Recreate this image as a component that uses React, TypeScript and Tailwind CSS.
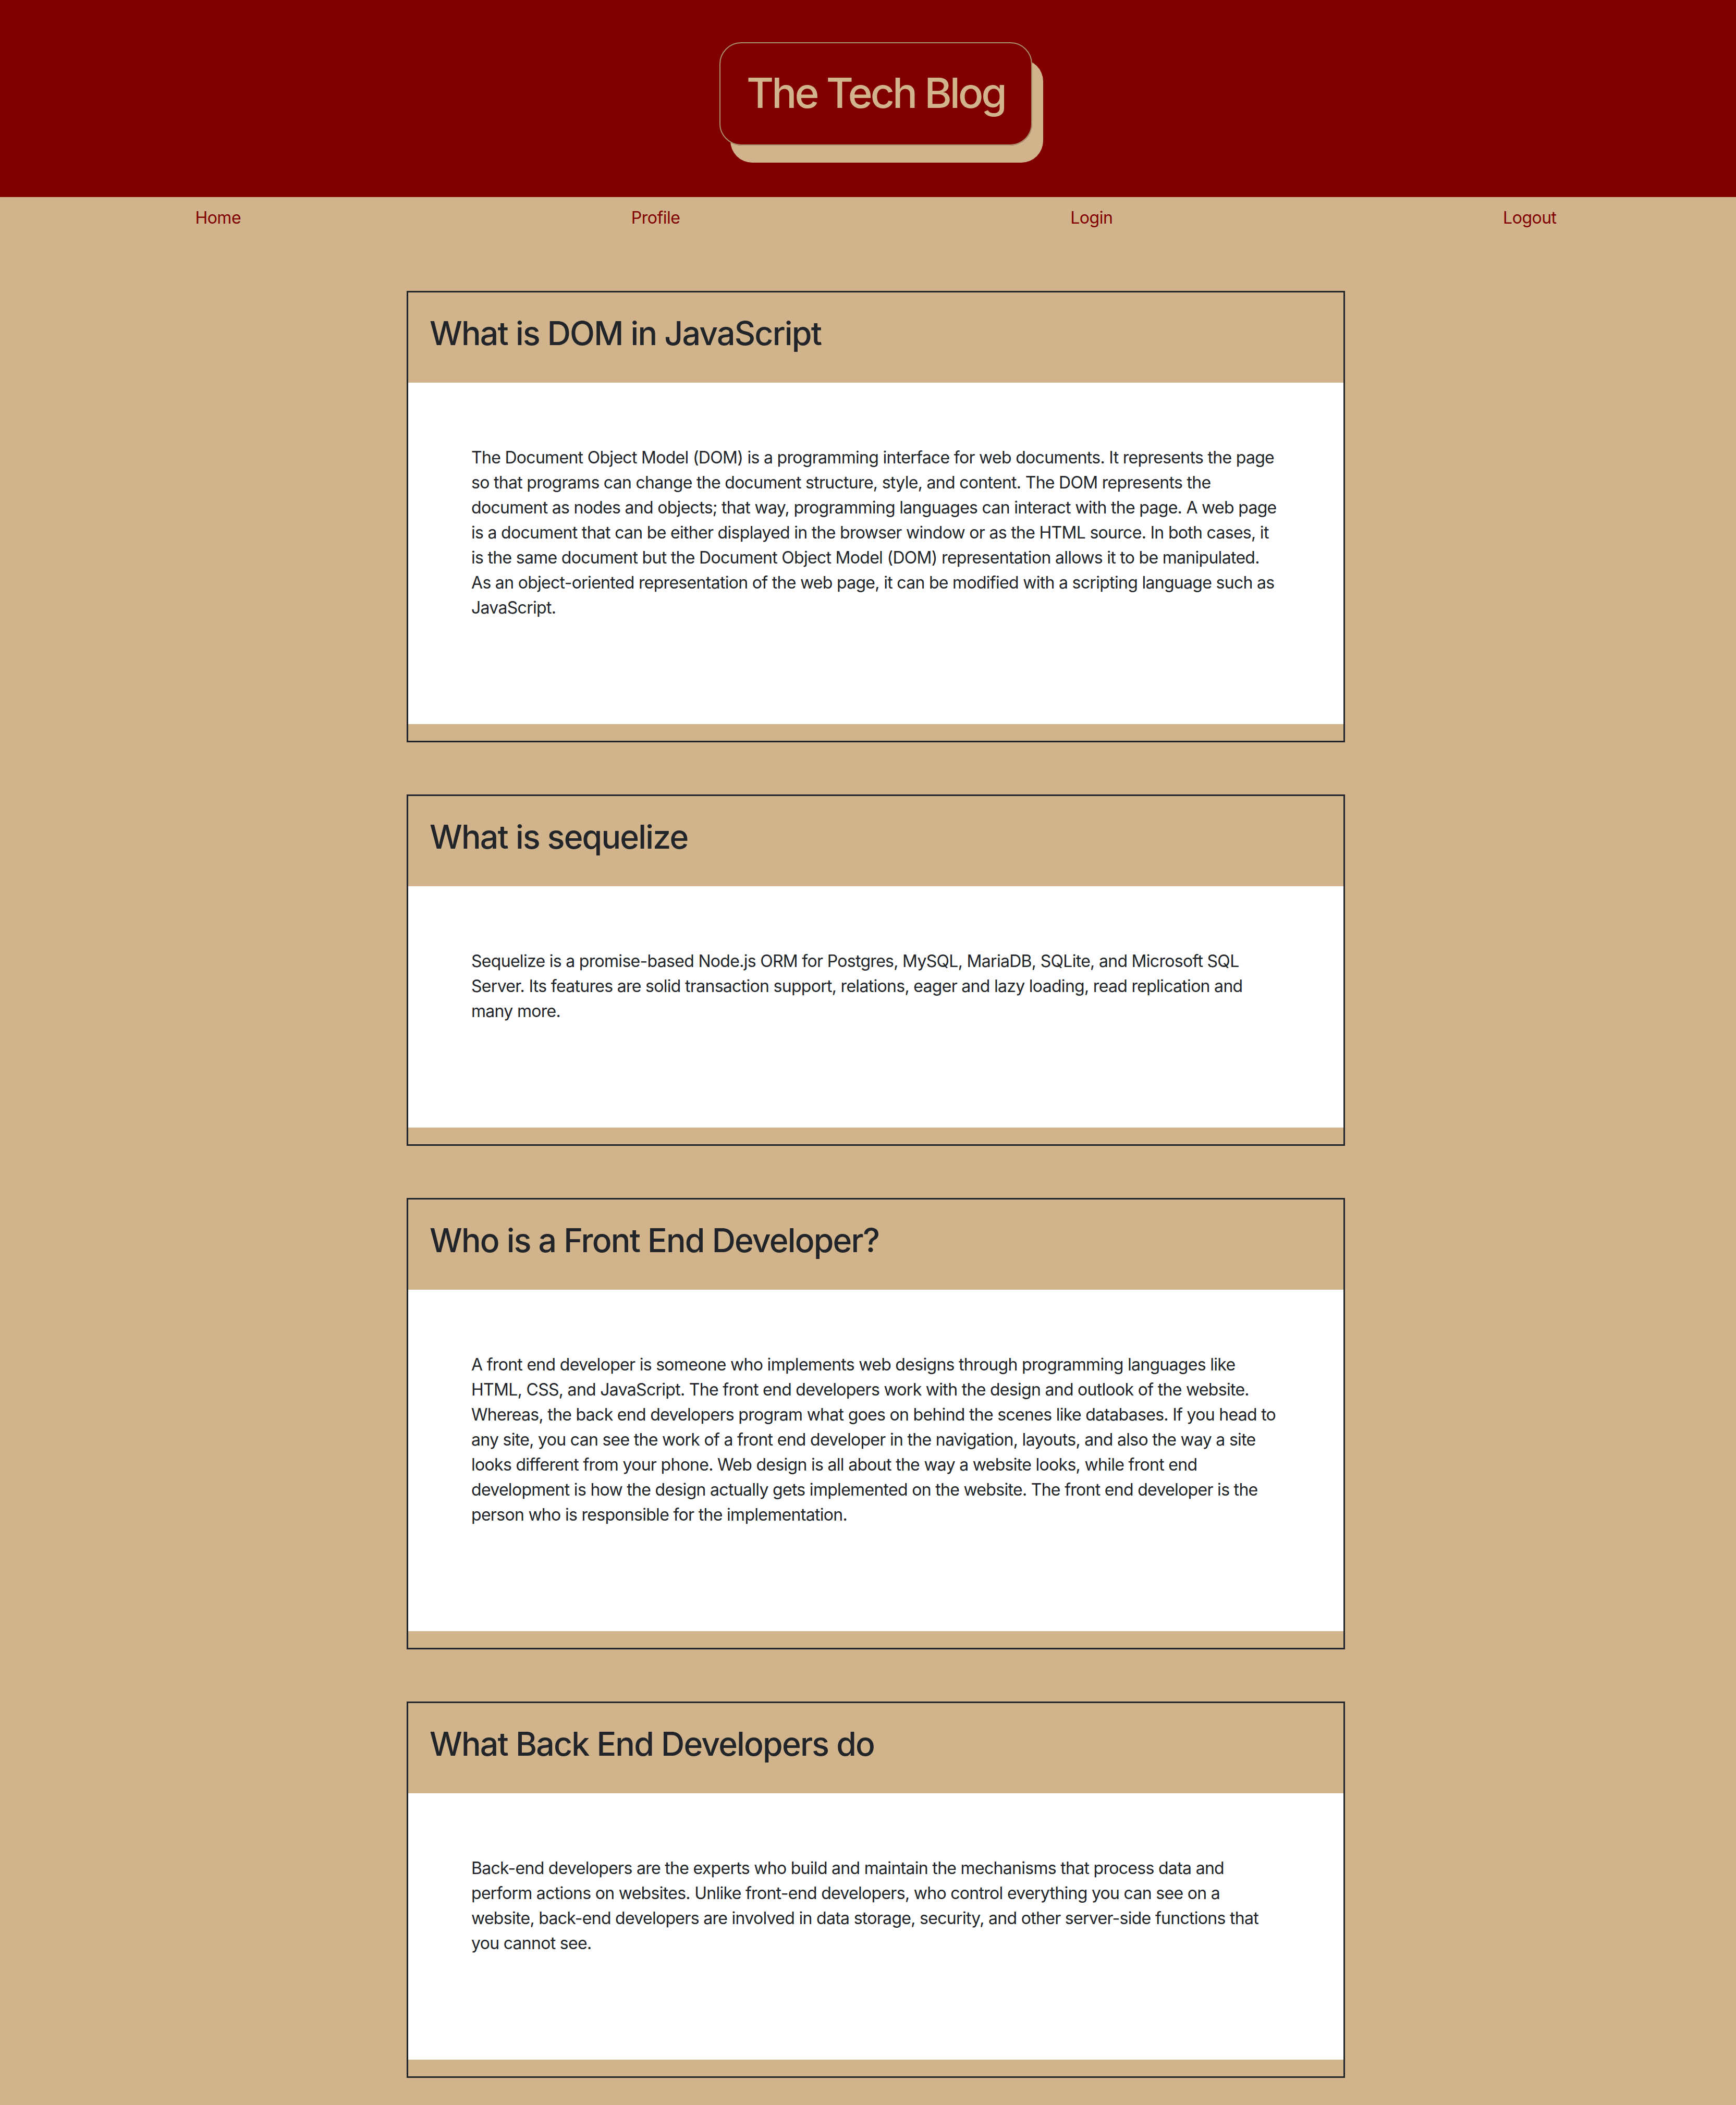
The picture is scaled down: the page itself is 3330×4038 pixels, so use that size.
const posts = [
  {
    title: "What is DOM in JavaScript",
    body: "The Document Object Model (DOM) is a programming interface for web documents. It represents the page so that programs can change the document structure, style, and content. The DOM represents the document as nodes and objects; that way, programming languages can interact with the page. A web page is a document that can be either displayed in the browser window or as the HTML source. In both cases, it is the same document but the Document Object Model (DOM) representation allows it to be manipulated. As an object-oriented representation of the web page, it can be modified with a scripting language such as JavaScript.",
  },
  {
    title: "What is sequelize",
    body: "Sequelize is a promise-based Node.js ORM for Postgres, MySQL, MariaDB, SQLite, and Microsoft SQL Server. Its features are solid transaction support, relations, eager and lazy loading, read replication and many more.",
  },
  {
    title: "Who is a Front End Developer?",
    body: "A front end developer is someone who implements web designs through programming languages like HTML, CSS, and JavaScript. The front end developers work with the design and outlook of the website. Whereas, the back end developers program what goes on behind the scenes like databases. If you head to any site, you can see the work of a front end developer in the navigation, layouts, and also the way a site looks different from your phone. Web design is all about the way a website looks, while front end development is how the design actually gets implemented on the website. The front end developer is the person who is responsible for the implementation.",
  },
  {
    title: "What Back End Developers do",
    body: "Back-end developers are the experts who build and maintain the mechanisms that process data and perform actions on websites. Unlike front-end developers, who control everything you can see on a website, back-end developers are involved in data storage, security, and other server-side functions that you cannot see.",
  },
];

const links = ["Home", "Profile", "Login", "Logout"];

function PostCard({ title, body }: { title: string; body: string }) {
  return (
    <article className="w-[1800px] mt-[100px] border-[3px] border-[#212529] bg-[#d2b48c]">
      <header className="px-[41px] pt-[41px] pb-[57px]">
        <h2 className="text-[62.6px] leading-[75px] font-medium tracking-[-1.8px] text-[#212529]">
          {title}
        </h2>
      </header>
      <div className="bg-white px-[121px] pt-[120px] pb-[199px]">
        <p className="text-[32px] leading-[48px] tracking-[-0.7px] text-[#212529]">{body}</p>
      </div>
      <div className="h-[32px]" />
    </article>
  );
}

export default function App() {
  return (
    <div className="min-h-screen overflow-hidden bg-[#d2b48c] pb-[52px] font-['Inter',sans-serif]">
      <header className="h-[378px] bg-[#800000] flex justify-center pt-[81px]">
        <div className="ml-[30px] w-[600px] h-[198px] rounded-[42px] border-2 border-[#a8906c] shadow-[21px_33px_0_#d2b48c] flex items-center justify-center">
          <h1 className="text-[80px] font-medium text-[#d2b48c] tracking-[-4px] leading-none pb-[4px]">
            The Tech Blog
          </h1>
        </div>
      </header>

      {/* the original layout is 30px wider than the shot */}
      <nav className="flex justify-around mr-[-30px] py-[16px]">
        {links.map((l) => (
          <a key={l} href="#" className="text-[32px] leading-[48px] tracking-[-0.5px] text-[#800000]">
            {l}
          </a>
        ))}
      </nav>

      <main className="flex flex-col items-center pl-[30px]">
        {posts.map((p) => (
          <PostCard key={p.title} title={p.title} body={p.body} />
        ))}
      </main>
    </div>
  );
}
